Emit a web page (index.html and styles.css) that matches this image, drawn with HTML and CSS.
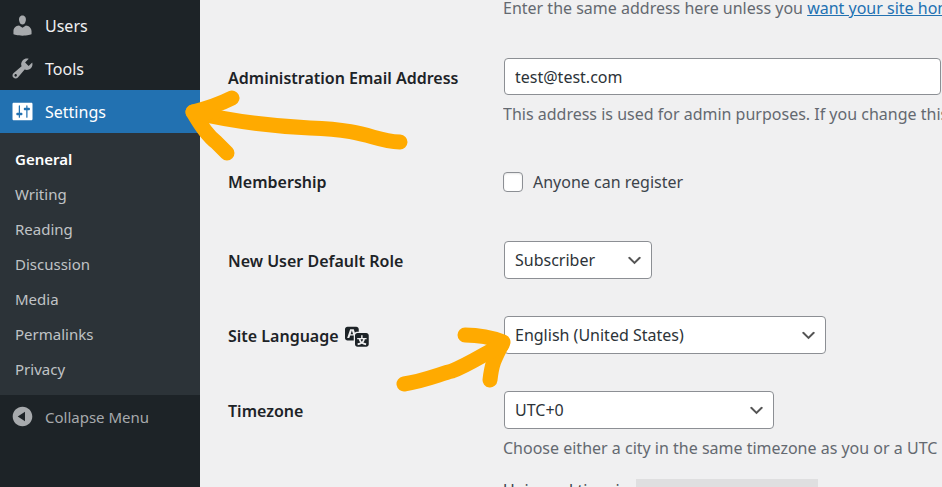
FILE: index.html
```
<!DOCTYPE html>
<html lang="en">
<head>
  <title>General Settings</title>
  <meta charset="UTF-8">
  <link rel="stylesheet" href="styles.css">
</head>
<body>

<nav class="sidebar">
  <a class="menu-item" href="#">
    <svg class="icon" viewBox="0 0 20 20"><path d="M10 9.25c-2.27 0-2.73-3.44-2.73-3.44C7 4.02 7.82 2 9.97 2c2.16 0 2.98 2.02 2.71 3.81 0 0-.41 3.44-2.68 3.44zm0 2.57L12.72 10c2.39 0 4.52 2.33 4.52 4.53v2.49s-3.65 1.13-7.24 1.13c-3.65 0-7.24-1.13-7.24-1.13v-2.49c0-2.25 1.94-4.48 4.47-4.48z"/></svg>
    Users
  </a>
  <a class="menu-item" href="#">
    <svg class="icon" viewBox="0 0 20 20"><path d="M16.68 9.77c-1.34 1.34-3.3 1.67-4.95.99l-5.41 6.52c-.99.99-2.59.99-3.58 0s-.99-2.59 0-3.57l6.52-5.42c-.68-1.65-.35-3.61.99-4.95 1.28-1.28 3.12-1.62 4.72-1.06l-2.89 2.89 2.82 2.82 2.86-2.87c.53 1.58.18 3.39-1.08 4.65zM3.81 16.21c.4.39 1.04.39 1.43 0 .4-.4.4-1.04 0-1.43-.39-.4-1.03-.4-1.43 0-.39.39-.39 1.03 0 1.43z"/></svg>
    Tools
  </a>
  <a class="menu-item current" href="#">
    <svg class="icon" viewBox="0 0 20 20"><path d="M18 16V4c0-.55-.45-1-1-1H3c-.55 0-1 .45-1 1v12c0 .55.45 1 1 1h14c.55 0 1-.45 1-1zM8 11h1c.55 0 1 .45 1 1s-.45 1-1 1H8v1.5c0 .28-.22.5-.5.5s-.5-.22-.5-.5V13H6c-.55 0-1-.45-1-1s.45-1 1-1h1V5.5c0-.28.22-.5.5-.5s.5.22.5.5V11zm5-2h-1c-.55 0-1-.45-1-1s.45-1 1-1h1V5.5c0-.28.22-.5.5-.5s.5.22.5.5V7h1c.55 0 1 .45 1 1s-.45 1-1 1h-1v5.5c0 .28-.22.5-.5.5s-.5-.22-.5-.5V9z"/></svg>
    Settings
  </a>
  <div class="submenu">
    <a class="active" href="#">General</a>
    <a href="#">Writing</a>
    <a href="#">Reading</a>
    <a href="#">Discussion</a>
    <a href="#">Media</a>
    <a href="#">Permalinks</a>
    <a href="#">Privacy</a>
  </div>
  <button class="menu-item collapse" type="button">
    <svg class="icon" viewBox="0 0 20 20"><path d="M10 2.16c4.33 0 7.84 3.51 7.84 7.84s-3.51 7.84-7.84 7.84S2.16 14.33 2.16 10 5.71 2.16 10 2.16zm2 11.72V6.12L6.18 9.97z"/></svg>
    Collapse Menu
  </button>
</nav>

<form class="settings">
  <div class="row">
    <div class="field">
      <p class="description">Enter the same address here unless you <a href="#">want your site home</a></p>
    </div>
  </div>
  <div class="row">
    <label class="title" for="email">Administration Email Address</label>
    <div class="field">
      <input class="control email" type="email" id="email" value="test@test.com">
      <p class="description">This address is used for admin purposes. If you change this</p>
    </div>
  </div>
  <div class="row membership">
    <span class="title">Membership</span>
    <div class="field">
      <label class="check"><input type="checkbox"> Anyone can register</label>
    </div>
  </div>
  <div class="row">
    <label class="title" for="role">New User Default Role</label>
    <div class="field">
      <select class="control role" id="role"><option>Subscriber</option></select>
    </div>
  </div>
  <div class="row">
    <label class="title" for="language">Site Language
      <svg class="icon" viewBox="0 0 20 20"><path d="M11 7H9.49c-.63 0-1.25.3-1.59.7L7 5H4.13l-2.39 7h1.69l.74-2H7v4H2c-1.1 0-2-.9-2-2V5c0-1.1.9-2 2-2h7c1.1 0 2 .9 2 2v2zM6.51 9H4.49l1-2.93zM10 8h7c1.1 0 2 .9 2 2v7c0 1.1-.9 2-2 2h-7c-1.1 0-2-.9-2-2v-7c0-1.1.9-2 2-2zm7.25 5v-1.08h-3.17V9.75h-1.16v2.17H9.75V13h1.28c.11.85.56 1.85 1.28 2.62-.87.36-1.89.62-2.31.62-.01.02.22.97.2 1.46.84 0 2.21-.5 3.28-1.15 1.09.65 2.48 1.15 3.34 1.15-.02-.49.2-1.44.2-1.46-.43 0-1.49-.27-2.38-.63.7-.77 1.14-1.77 1.25-2.61h1.36zm-3.81 1.93c-.5-.46-.85-1.13-1.01-1.93h2.09c-.17.8-.51 1.47-1 1.93l-.04.03s-.03-.02-.04-.03z"/></svg>
    </label>
    <div class="field">
      <select class="control language" id="language"><option>English (United States)</option></select>
    </div>
  </div>
  <div class="row">
    <label class="title" for="timezone">Timezone</label>
    <div class="field">
      <select class="control timezone" id="timezone"><option>UTC+0</option></select>
      <p class="description">Choose either a city in the same timezone as you or a UTC</p>
      <p class="time-info">Universal time is <code></code></p>
    </div>
  </div>
</form>

<!-- hand-drawn arrows -->
<svg class="arrow arrow-menu" viewBox="0 0 240 90"><path d="M52 18C38 25 25 29 13 32C21 46 28 56 36 62L47 73"/><path d="M13 32C50 41 90 46 130 48C190 50 192 61 220 62"/><path class="fill" d="M13 32L30 29L46 37L26 40L24 44z"/></svg>
<svg class="arrow arrow-language" viewBox="0 0 130 80"><path d="M65 15C80 15 93 18 103 22C95 38 92 42 90 60"/><path d="M4 64C24 61 40 54 52 51C68 45 84 34 102 25"/></svg>

</body>
</html>
```
FILE: styles.css
```
* {
    box-sizing: border-box;
}
body {
    margin: 0;
    display: flex;
    height: 100vh;
    overflow: hidden;
    background-color: #f0f0f1;
    color: #3c434a;
    font-family: "Noto Sans", "Open Sans", sans-serif;
    font-size: 16px;
    line-height: 26px;
}
p {
    margin: 0;
}
.icon {
    width: 25px;
    height: 25px;
    fill: currentColor;
}

/* sidebar */
.sidebar {
    flex: 0 0 200px;
    padding-top: 4px;
    background-color: #1d2327;
}
.menu-item {
    display: flex;
    align-items: center;
    gap: 10px;
    width: 100%;
    height: 43px;
    padding: 0 10px;
    color: #f0f0f1;
    text-decoration: none;
}
.menu-item .icon {
    color: #a7aaad;
}
.menu-item.current,
.menu-item.current .icon {
    background-color: #2271b1;
    color: #fff;
}
.submenu {
    padding: 9px 0 8px;
    background-color: #2c3338;
}
.submenu a {
    display: block;
    padding-left: 15px;
    color: #c0c3c6;
    font-size: 15px;
    line-height: 35px;
    text-decoration: none;
}
.submenu .active {
    color: #fff;
    font-weight: 600;
}
.menu-item.collapse {
    border: 0;
    background: none;
    color: #a7aaad;
    font: inherit;
    font-size: 15px;
}

/* settings form */
.settings {
    flex: 1;
    min-width: 0;
    display: flex;
    flex-direction: column;
    gap: 37px;
    margin-top: -5px;
    padding-left: 28px;
}
.row {
    display: grid;
    grid-template-columns: 275px 1fr;
}
.field {
    grid-column: 2;
    min-width: 0;
    overflow: hidden;
    white-space: nowrap;
}
.title {
    display: flex;
    align-items: center;
    gap: 6px;
    height: 39px;
    color: #1d2327;
    font-weight: 600;
}
.control {
    display: block;
    height: 38px;
    margin-left: 1px;
    padding: 0 10px;
    border: 1px solid #8c8f94;
    border-radius: 4px;
    background-color: #fff;
    color: #2c3338;
    font: inherit;
}
.row:not(:last-child) .title {
    margin-bottom: -1px;
}
.email {
    width: calc(100% - 2px);
    height: 37px;
}
select.control {
    appearance: none;
    background-image: url("data:image/svg+xml,%3Csvg xmlns='http://www.w3.org/2000/svg' viewBox='0 0 20 20'%3E%3Cpath d='M5 6l5 5 5-5 2 1-7 7-7-7 2-1z' fill='%23555'/%3E%3C/svg%3E");
    background-repeat: no-repeat;
    background-position: right 7px center;
    background-size: 19px;
}
.role {
    width: 148px;
}
.language {
    width: 322px;
}
.timezone {
    width: 270px;
}
.description {
    padding-top: 6px;
    color: #646970;
}
.row:first-child .description {
    padding-top: 0;
}
.description a {
    color: #2271b1;
}
.membership {
    min-height: 40px;
}
.membership .title,
.check {
    height: 36px;
}
.check {
    display: flex;
    align-items: center;
    gap: 10px;
}
.check input {
    appearance: none;
    width: 20px;
    height: 20px;
    margin: 0;
    border: 1px solid #8c8f94;
    border-radius: 4px;
    background-color: #fff;
    box-shadow: inset 0 1px 2px rgba(0, 0, 0, 0.1);
}
.time-info {
    display: flex;
    gap: 9px;
    padding-top: 16px;
}
.time-info code {
    width: 182px;
    height: 24px;
    margin-top: 2px;
    background-color: #dfdfe0;
}

/* arrows over the page */
.arrow {
    position: absolute;
    overflow: visible;
    fill: none;
    stroke: #ffaa00;
    stroke-width: 15;
    stroke-linecap: round;
    stroke-linejoin: round;
}
.arrow .fill {
    fill: #ffaa00;
    stroke: none;
}
.arrow-menu {
    left: 180px;
    top: 80px;
    width: 240px;
    height: 90px;
}
.arrow-language {
    left: 400px;
    top: 320px;
    width: 130px;
    height: 80px;
}
```
